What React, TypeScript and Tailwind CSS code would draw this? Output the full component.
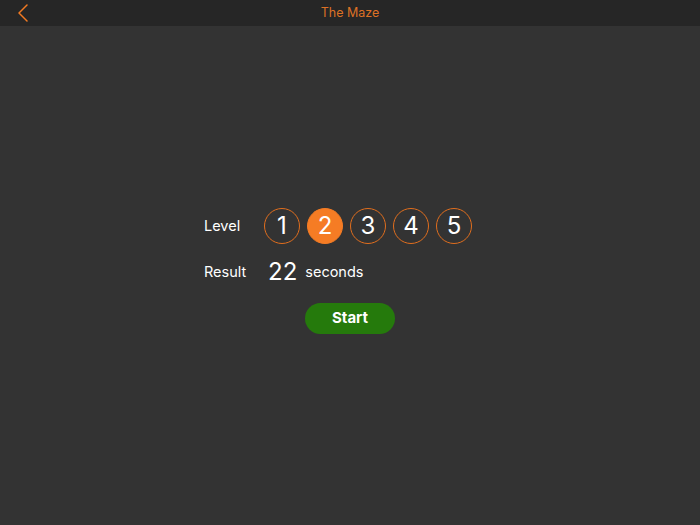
import React, { useState } from 'react';

const App = () => {
  const [level, setLevel] = useState(2);
  const levels = [1, 2, 3, 4, 5];

  return (
    <div className="w-[700px] h-[525px] bg-[#333333] flex flex-col" style={{ fontFamily: 'Inter, "Liberation Sans", sans-serif' }}>
      {/* Nav bar */}
      <div className="h-[26px] bg-[#262626] flex items-center relative shrink-0">
        <button className="ml-[16px] h-[26px] w-[14px] flex items-center">
          <svg width="13" height="18" viewBox="0 0 13 18" fill="none">
            <path d="M11 1 L3 9 L11 17" stroke="#f27a22" strokeWidth="1.5" strokeLinecap="round" strokeLinejoin="round" />
          </svg>
        </button>
        <div className="absolute inset-0 flex items-center justify-center text-[12.5px] text-[#dc7125] pointer-events-none">
          The Maze
        </div>
      </div>

      {/* Content */}
      <div className="w-[292px] mx-auto mt-[182px] flex flex-col">
        <div className="flex items-center h-[36px]">
          <span className="w-[60px] text-[14.5px] text-white">Level</span>
          <div className="flex gap-[7px]">
            {levels.map((n) => (
              <button
                key={n}
                onClick={() => setLevel(n)}
                className={
                  n === level
                    ? 'w-[36px] h-[36px] rounded-full border border-[#f57c24] bg-[#f57c24] text-white text-[24px] leading-none flex items-center justify-center'
                    : 'w-[36px] h-[36px] rounded-full border border-[#e06e1e] text-white text-[24px] leading-none flex items-center justify-center'
                }
              >
                {n}
              </button>
            ))}
          </div>
        </div>

        <div className="flex items-center h-[36px] mt-[10px]">
          <span className="w-[60px] text-[14.5px] text-white">Result</span>
          <span className="ml-[4px] text-[24px] text-white leading-none">22</span>
          <span className="ml-[8px] text-[14.5px] text-white">seconds</span>
        </div>

        <button className="mt-[13px] self-center w-[90px] h-[31px] rounded-full bg-[#257a0c] text-white text-[15px] font-bold">
          Start
        </button>
      </div>
    </div>
  );
};

export default App;
